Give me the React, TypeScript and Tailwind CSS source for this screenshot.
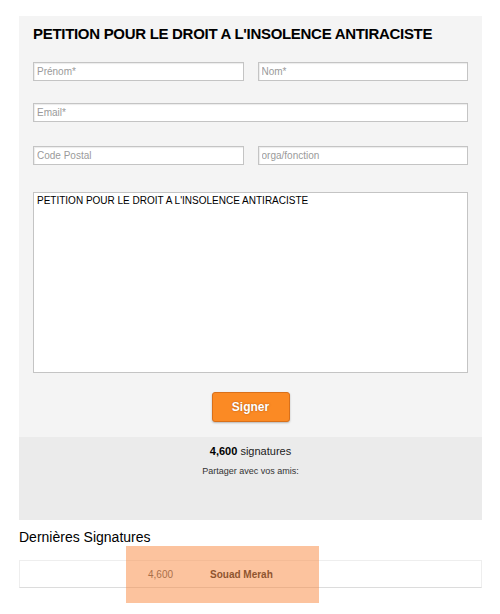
import React from "react";

const font = { fontFamily: '"Liberation Sans", Arial, sans-serif' };

function Field({ placeholder, className = "" }: { placeholder: string; className?: string }) {
  return (
    <input
      placeholder={placeholder}
      className={`h-[19px] border border-[#c4c4c4] bg-white px-[3px] text-[10px] text-black placeholder:text-[#9a9a9a] outline-none shadow-[inset_1px_1px_1px_rgba(0,0,0,0.08)] ${className}`}
      style={font}
    />
  );
}

export default function App() {
  return (
    <div className="relative min-h-[614px] w-[500px] bg-white pl-[19px] pr-[18px] pt-[16px]" style={font}>
      <div className="bg-[#f4f4f4] px-[14px] pt-[8px]">
        <h1 className="whitespace-nowrap text-[15px] font-bold leading-[20px] tracking-[-0.3px] text-black">
          PETITION POUR LE DROIT A L'INSOLENCE ANTIRACISTE
        </h1>
        <div className="mt-[18px] flex gap-[14px]">
          <Field placeholder="Prénom*" className="w-[211px]" />
          <Field placeholder="Nom*" className="w-[211px]" />
        </div>
        <div className="mt-[22px] flex">
          <Field placeholder="Email*" className="w-full" />
        </div>
        <div className="mt-[24px] flex gap-[14px]">
          <Field placeholder="Code Postal" className="w-[211px]" />
          <Field placeholder="orga/fonction" className="w-[211px]" />
        </div>
        <textarea
          className="mt-[27px] block h-[181px] w-full resize-none border border-[#c4c4c4] bg-white px-[3px] py-[1px] text-[10px] leading-[13px] text-black outline-none"
          style={font}
          defaultValue="PETITION POUR LE DROIT A L'INSOLENCE ANTIRACISTE"
        />
        <div className="flex justify-center pb-[15px] pt-[19px]">
          <button
            className="h-[30px] w-[78px] rounded-[3px] border border-[#d9701a] bg-[#fb8a24] text-[12px] font-bold text-white shadow-[0_1px_2px_rgba(0,0,0,0.25)] [text-shadow:0_0_2px_rgba(120,50,0,0.6)]"
            style={font}
          >
            Signer
          </button>
        </div>
      </div>
      <div className="flex h-[83px] flex-col items-center bg-[#ebebeb] pt-[7px]">
        <div className="text-[11px] leading-[14px] text-[#222]">
          <span className="font-bold text-black">4,600</span> signatures
        </div>
        <div className="mt-[8px] text-[9px] leading-[11px] text-[#333]">Partager avec vos amis:</div>
      </div>
      <div className="mt-[9px] text-[14px] leading-[16px] text-black">Dernières Signatures</div>
      <div className="mt-[15px] flex h-[28px] items-center border border-[#eeeeee] border-b-[#dcdcdc] bg-white text-[10px]">
        <span className="ml-[128px] w-[62px] text-[#555]">4,600</span>
        <span className="font-bold text-[#222]">Souad Merah</span>
      </div>
      <div className="absolute left-[126px] top-[546px] h-[57px] w-[193px] bg-[#f9873d]/50" />
    </div>
  );
}
